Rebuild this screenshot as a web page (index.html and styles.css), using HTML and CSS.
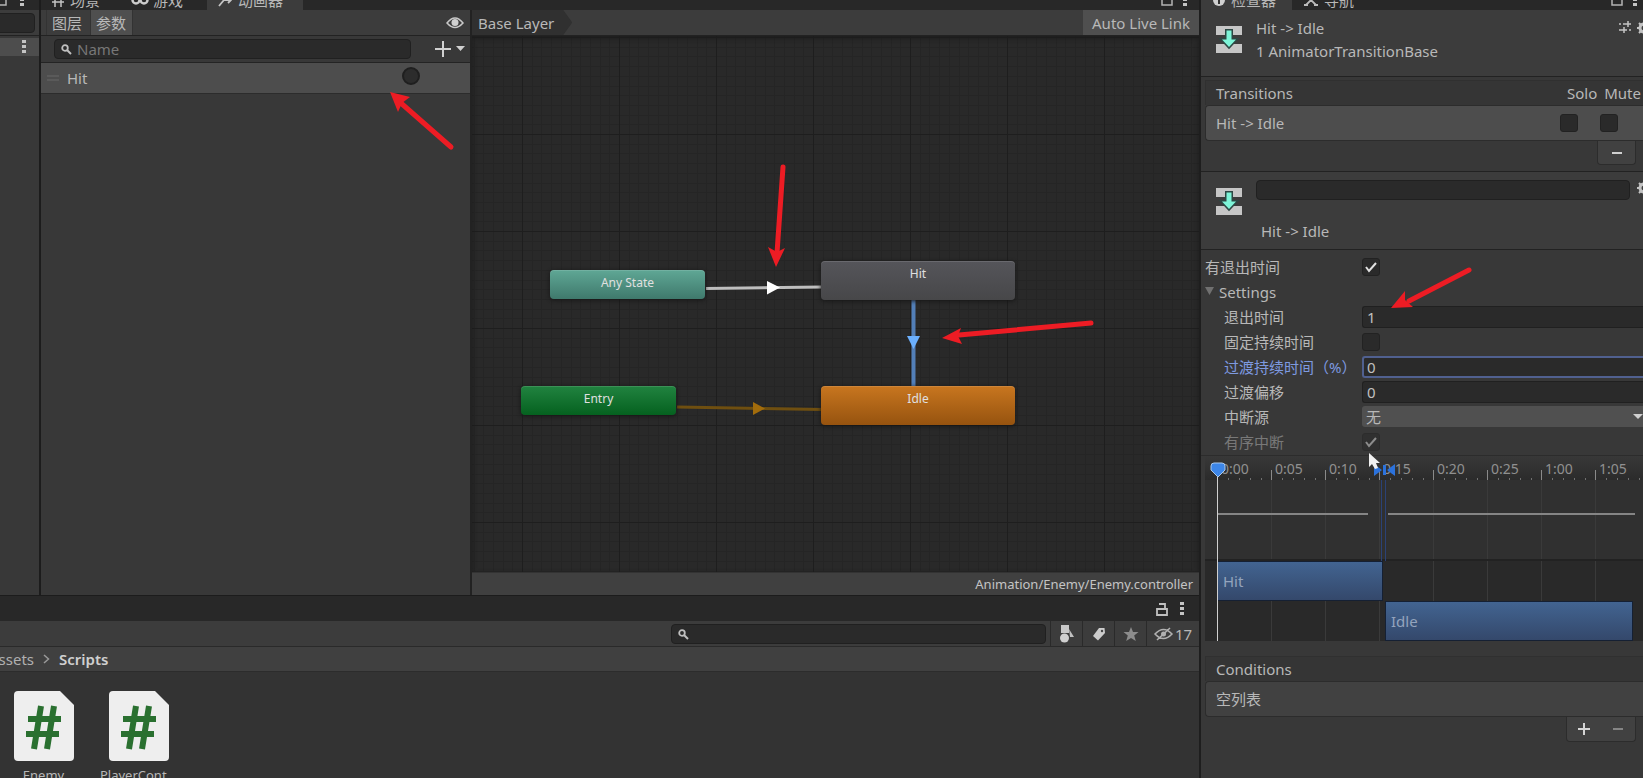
FILE: index.html
```html
<!DOCTYPE html>
<html lang="zh-CN">
<head>
<meta charset="utf-8">
<title>Animator</title>
<link rel="stylesheet" href="styles.css">
</head>
<body>
<svg class="defs" aria-hidden="true">
  <symbol id="transition" viewBox="0 0 28 28">
    <path d="M1 1h26v9H1zM1 19h26v9H1z" fill="#c6c6c6"/>
    <path d="M11.500 5.500h5v9h4.500L14 22 7 14.500h4.500z" fill="#7df5d8" stroke="#2c4743" stroke-width="3" paint-order="stroke"/>
  </symbol>
  <symbol id="dots" viewBox="0 0 4 14"><path d="M0 0h4v3H0zM0 5h4v3H0zM0 10h4v3H0z" fill="#c4c4c4"/></symbol>
  <symbol id="box" viewBox="0 0 12 12"><path d="M1 1h10v10H1z" fill="none" stroke="#b4b4b4" stroke-width="1.500"/></symbol>
  <symbol id="lens" viewBox="0 0 14 14"><circle cx="5" cy="6" r="2.800" fill="none" stroke="#c0c0c0" stroke-width="1.800"/><path d="M7 8l4 4" stroke="#c0c0c0" stroke-width="2"/></symbol>
  <symbol id="gear" viewBox="0 0 14 14"><circle cx="7" cy="7" r="4" fill="none" stroke="#c4c4c4" stroke-width="3"/><path d="M7 0v3M7 11v3M0 7h3M11 7h3M2 2l2 2M10 10l2 2M12 2l-2 2M4 10l-2 2" stroke="#c4c4c4" stroke-width="2"/></symbol>
  <symbol id="script" viewBox="0 0 60 70">
    <path d="M4 0h42l14 14v52q0 4-4 4H4q-4 0-4-4V4q0-4 4-4z" fill="#eee"/>
    <path d="M27 15l-7 43M40 15l-7 43M14 28h33M12 43h33" stroke="#2a7030" stroke-width="6" fill="none"/>
  </symbol>
</svg>

<div class="editor">
  <div class="workspace">
    <div class="upper">
      <aside class="hierarchy">
        <div class="dock"><div class="dock-row dock-tools"><svg width="12" height="12"><use href="#box"/></svg><svg width="4" height="14"><use href="#dots"/></svg></div></div>
        <div class="bar"><input class="field stub" type="text" aria-label="Search hierarchy"></div>
        <div class="scene-row"><button class="plain" aria-label="Scene menu"><svg width="4" height="14"><use href="#dots"/></svg></button></div>
      </aside>

      <section class="animator">
        <div class="dock">
          <div class="dock-row">
            <button class="tab tab-scene"><svg width="12" height="14" viewBox="0 0 12 14"><path d="M0 4h12M0 9h12M3 0v14M9 0v14" stroke="#c4c4c4" stroke-width="1.500"/></svg>场景</button>
            <button class="tab tab-game"><svg width="18" height="10" viewBox="0 0 18 10"><circle cx="5" cy="5" r="3.500" fill="none" stroke="#ccc" stroke-width="2.500"/><circle cx="13" cy="5" r="3.500" fill="none" stroke="#ccc" stroke-width="2.500"/></svg>游戏</button>
            <button class="tab tab-anim active"><svg width="14" height="14" viewBox="0 0 14 14"><path d="M1 13l5-6h7M10 4l3 3-3 3" fill="none" stroke="#c4c4c4" stroke-width="1.800"/></svg>动画器</button>
            <span class="dock-tools push"><svg width="12" height="12"><use href="#box"/></svg><svg width="4" height="14"><use href="#dots"/></svg></span>
          </div>
        </div>
        <div class="split">
          <div class="params">
            <div class="bar params-tabs">
              <button class="toggle">图层</button><button class="toggle on">参数</button>
              <button class="plain push" aria-label="Visibility"><svg width="18" height="12" viewBox="0 0 18 12"><path d="M1 6q8-10 16 0-8 9-16 0z" fill="none" stroke="#c8c8c8" stroke-width="1.500"/><circle cx="9" cy="5.500" r="3.500" fill="#d0d0d0"/></svg></button>
            </div>
            <div class="params-search">
              <label class="field search"><svg width="14" height="14"><use href="#lens"/></svg><input type="text" placeholder="Name" aria-label="Name"></label>
              <button class="plain add" aria-label="Add parameter"><svg width="30" height="16" viewBox="0 0 30 16"><path d="M8 0v16M0 8h16" stroke="#d0d0d0" stroke-width="2"/><path d="M21 5h9l-4.500 5z" fill="#d0d0d0"/></svg></button>
            </div>
            <div class="param-row">
              <svg width="12" height="6" viewBox="0 0 12 6"><path d="M0 1h12M0 5h12" stroke="#686868"/></svg>
              <label for="hit">Hit</label><input id="hit" class="trigger" type="radio">
            </div>
            <svg class="mark mark-param" width="70" height="64" viewBox="0 0 70 64"><path d="M12 12l49 43" /><path class="head" d="M0 0l20 5-8 6-4 9z"/></svg>
          </div>
          <div class="graph">
            <div class="bar graph-bar"><button class="crumb">Base Layer</button><button class="live">Auto Live Link</button></div>
            <div class="canvas">
              <svg class="edges" width="728" height="536" viewBox="0 0 728 536">
                <path d="M234 252.500l116-1.500" stroke="#bdbdbd" stroke-width="3"/><path d="M295 245l13 6.500-13 7z" fill="#fff"/>
                <path d="M441.500 264v87" stroke="#527fb8" stroke-width="4"/><path d="M435 300h13l-6.500 13z" fill="#6bb0ff"/>
                <path d="M205 371l145 2.500" stroke="#6f4f10" stroke-width="3"/><path d="M281 366l12 6.500-12 6.500z" fill="#a26c0c"/>
              </svg>
              <div class="node any">Any State</div>
              <div class="node hit">Hit</div>
              <div class="node entry">Entry</div>
              <div class="node idle">Idle</div>
              <svg class="mark mark-graph" width="728" height="536" viewBox="0 0 728 536">
                <path d="M311 131l-6 86"/><path class="head" d="M304 231l-8-20 9 5 8-4z"/>
                <path d="M619 287l-132 12"/><path class="head" d="M470 302l19-10-3 8 4 8z"/>
              </svg>
            </div>
            <div class="path">Animation/Enemy/Enemy.controller</div>
          </div>
        </div>
      </section>
    </div>

    <section class="project">
      <div class="project-dock">
        <svg width="12" height="14" viewBox="0 0 12 14"><path d="M1 7h10v6H1zM3 2h6v5" fill="none" stroke="#c0c0c0" stroke-width="1.800"/></svg>
        <svg width="4" height="14"><use href="#dots"/></svg>
      </div>
      <div class="project-tools">
        <label class="field search"><svg width="14" height="14"><use href="#lens"/></svg><input type="text" aria-label="Search project"></label>
        <button class="tool" aria-label="Type"><svg width="16" height="18" viewBox="0 0 16 18"><path d="M2 0h8v8H2z" fill="#c8c8c8"/><circle cx="5.500" cy="13" r="4.500" fill="#d0d0d0"/><path d="M10 4l5 8h-4z" fill="#c0c0c0"/></svg></button>
        <button class="tool" aria-label="Label"><svg width="14" height="14" viewBox="0 0 14 14"><path d="M7 1h5.500L13 6l-7 7.500L1 9z" fill="#ccc"/><circle cx="10" cy="4" r="1.200" fill="#444"/></svg></button>
        <button class="tool" aria-label="Favorite"><svg width="16" height="16" viewBox="0 0 16 16"><path d="M8 1l2 5h5.500l-4.300 3.500 1.600 5.500L8 12l-4.800 3 1.600-5.500L.5 6H6z" fill="#8c8c8c"/></svg></button>
        <button class="tool hidden-count"><svg width="19" height="14" viewBox="0 0 19 14"><path d="M1 7q8.500-9 17 0-8.500 9-17 0zM3 13L16 1" fill="none" stroke="#b0b0b0" stroke-width="1.600"/><circle cx="9.500" cy="7" r="2.500" fill="#b0b0b0"/></svg>17</button>
      </div>
      <nav class="crumbs"><a href="#">Assets</a><svg width="7" height="10" viewBox="0 0 7 10"><path d="M1 1l4.500 4L1 9" fill="none" stroke="#999" stroke-width="1.500"/></svg><strong>Scripts</strong></nav>
      <div class="files">
        <button class="file"><svg width="60" height="70"><use href="#script"/></svg>Enemy</button>
        <button class="file"><svg width="60" height="70"><use href="#script"/></svg>PlayerCont...</button>
      </div>
    </section>
  </div>

  <aside class="inspector">
    <div class="dock">
      <div class="dock-row">
        <button class="tab tab-inspect active"><svg width="12" height="12" viewBox="0 0 12 12"><circle cx="6" cy="6" r="6" fill="#d0d0d0"/><path d="M6 2v2M6 5v5" stroke="#333" stroke-width="2"/></svg>检查器</button>
        <button class="tab tab-nav"><svg width="14" height="14" viewBox="0 0 14 14"><path d="M2 2l10 10M12 2L2 12M0 12h4M10 12h4M0 2h4" stroke="#bbb" stroke-width="1.800"/></svg>导航</button>
        <span class="dock-tools push"><svg width="12" height="12"><use href="#box"/></svg><svg width="4" height="14"><use href="#dots"/></svg></span>
      </div>
    </div>
    <header class="head-block">
      <svg width="28" height="28"><use href="#transition"/></svg>
      <div class="titles"><div>Hit -&gt; Idle</div><div>1 AnimatorTransitionBase</div></div>
      <button class="plain" aria-label="Presets"><svg width="12" height="12" viewBox="0 0 12 12"><path d="M4 3h8M0 9h8M9 0v6M5 6v6M0 3h2M10 9h2" stroke="#c4c4c4" stroke-width="1.500"/></svg></button>
      <button class="plain" aria-label="Settings"><svg width="14" height="14"><use href="#gear"/></svg></button>
    </header>

    <section class="list transitions">
      <div class="list-head"><span>Transitions</span><span class="push">Solo</span><span>Mute</span></div>
      <div class="list-row selected"><span>Hit -&gt; Idle</span><input class="check push" type="checkbox" aria-label="Solo"><input class="check" type="checkbox" aria-label="Mute"></div>
      <div class="list-foot"><button aria-label="Remove transition"><svg width="10" height="12" viewBox="0 0 10 12"><path d="M0 6h10" stroke="#d0d0d0" stroke-width="2"/></svg></button></div>
    </section>

    <section class="name-block">
      <svg width="28" height="28"><use href="#transition"/></svg>
      <div class="name-body"><input class="field" type="text" aria-label="Transition name"><div>Hit -&gt; Idle</div></div>
      <button class="plain" aria-label="Options"><svg width="14" height="14"><use href="#gear"/></svg></button>
    </section>

    <section class="settings">
      <div class="row"><label for="exit">有退出时间</label><input id="exit" class="check" type="checkbox" checked></div>
      <button class="fold"><svg width="9" height="9" viewBox="0 0 9 9"><path d="M0 0h9L4.500 8z" fill="#707070"/></svg>Settings</button>
      <div class="row sub"><label for="time">退出时间</label><input id="time" class="field" type="text" value="1"></div>
      <div class="row sub"><label for="fixed">固定持续时间</label><input id="fixed" class="check" type="checkbox"></div>
      <div class="row sub current"><label for="duration">过渡持续时间（%）</label><input id="duration" class="field" type="text" value="0"></div>
      <div class="row sub"><label for="offset">过渡偏移</label><input id="offset" class="field" type="text" value="0"></div>
      <div class="row sub"><label for="source">中断源</label><span class="select"><select id="source"><option>无</option></select></span></div>
      <div class="row sub off"><label for="ordered">有序中断</label><input id="ordered" class="check" type="checkbox" checked disabled></div>
      <svg class="mark mark-time" width="86" height="48" viewBox="0 0 86 48"><path d="M78 2L18 33"/><path class="head" d="M0 40l14-17v9l8 7z"/></svg>
    </section>

    <section class="timeline">
      <div class="ruler"><span>0:00</span><span>0:05</span><span>0:10</span><span>0:15</span><span>0:20</span><span>0:25</span><span>1:00</span><span>1:05</span></div>
      <div class="curves"><i class="curve from"></i><i class="curve to"></i></div>
      <div class="track"><div class="clip clip-hit">Hit</div></div>
      <div class="track last"><div class="clip clip-idle">Idle</div></div>
      <div class="span"></div>
      <div class="playhead"></div>
      <svg class="handles" width="190" height="32" viewBox="0 0 190 32">
        <path d="M1 11q0-3 3-3h8q3 0 3 3v4l-7 7-7-7z" fill="#3d86e8" stroke="#a8c8ee"/>
        <path d="M164 9l8 6-8 6zM185 9l-8 6 8 6zM173 10h3v10h-3z" fill="#2b72dc"/>
        <path d="M159-2v14l3-3 3 5 3-1-2-5h4z" fill="#f0f0f0"/>
      </svg>
    </section>

    <section class="list conditions">
      <div class="list-head"><span>Conditions</span></div>
      <div class="list-row">空列表</div>
      <div class="list-foot"><div class="pair"><button aria-label="Add condition"><svg width="12" height="12" viewBox="0 0 12 12"><path d="M0 6h12M6 0v12" stroke="#d4d4d4" stroke-width="2"/></svg></button><button aria-label="Remove condition"><svg width="10" height="12" viewBox="0 0 10 12"><path d="M0 6h10" stroke="#858585" stroke-width="2"/></svg></button></div></div>
    </section>
  </aside>
</div>
</body>
</html>
```

FILE: styles.css
```css
* { box-sizing: border-box; }
html, body { height: 100%; }
body {
  margin: 0;
  overflow: hidden;
  background: #383838;
  color: #b8b8b8;
  font: 15px/20px "Noto Sans", "Noto Sans CJK SC", sans-serif;
}
button, input, select { font: inherit; color: inherit; margin: 0; }
button { border: 0; padding: 0; background: none; white-space: nowrap; }
svg { display: block; flex: none; }
.defs { position: absolute; width: 0; height: 0; }
.push { margin-left: auto; }

.editor { display: grid; grid-template-columns: minmax(0, 1fr) 444px; height: 100vh; }
.workspace { display: flex; flex-direction: column; min-width: 0; }
.upper { flex: 1; display: flex; min-height: 0; border-bottom: 1px solid #1c1c1c; }
.hierarchy { width: 41px; flex: none; border-right: 2px solid #1c1c1c; }
.animator { flex: 1; min-width: 0; display: flex; flex-direction: column; }

.dock { height: 10px; flex: none; overflow: hidden; background: #282828; display: flex; align-items: flex-end; }
.dock-row { display: flex; flex: 1; height: 20px; flex-shrink: 0; }
.dock-tools { display: flex; align-items: center; gap: 10px; padding: 0 12px; }
.hierarchy .dock-tools { padding: 0; gap: 13px; margin-left: -5px; }
.tab { display: flex; align-items: center; gap: 6px; padding: 0 20px 0 11px; }
.tab.active { background: #3c3c3c; }
.tab-game { padding: 0 24px 0 11px; gap: 4px; }

.bar { display: flex; align-items: center; height: 26px; background: #3c3c3c; border-bottom: 1px solid #222; }
.field {
  height: 20px;
  border: 1px solid #202020;
  border-radius: 4px;
  background: #2a2a2a;
  color: #c0c0c0;
  outline: 0;
}
.stub { width: 42px; margin-left: -7px; }
.scene-row { display: flex; align-items: center; justify-content: flex-end; height: 18px; margin-top: 2px; padding-right: 13px; background: #4d4d4d; }

.split { flex: 1; display: flex; min-height: 0; }
.params { position: relative; flex: 0 0 431px; border-right: 2px solid #222; }
.params-tabs { padding: 0 6px 0 5px; }
.toggle { height: 25px; padding: 0 8px 0 5px; border-left: 1px solid #333; line-height: 24px; }
.toggle.on { background: #4f4f4f; padding: 0 6px 0 5px; border-right: 1px solid #333; }
.params-search { display: flex; align-items: center; gap: 24px; height: 27px; padding: 0 5px 0 13px; border-bottom: 1px solid #242424; }
.search { display: flex; align-items: center; gap: 3px; flex: 1; padding: 0 5px; }
.search input { flex: 1; min-width: 0; border: 0; padding: 0; height: 18px; background: none; outline: 0; }
.search input::placeholder { color: #777; opacity: 1; }
.param-row { display: flex; align-items: center; gap: 8px; height: 31px; padding: 0 50px 0 6px; border-bottom: 1px solid #2c2c2c; background: #4d4d4d; }
.trigger { appearance: none; width: 18px; height: 18px; margin-left: auto; margin-bottom: 4px; border: 2px solid #1f1f1f; border-radius: 50%; background: #2c2c2c; }

.mark { position: absolute; overflow: visible; fill: none; stroke: #ed1c24; stroke-width: 5; stroke-linecap: round; pointer-events: none; }
.mark .head { fill: #ed1c24; stroke: none; }
.mark-param { left: 349px; top: 82px; }
.mark-graph { left: 0; top: 0; }
.mark-time { left: 190px; top: 18px; }

.graph { flex: 1; min-width: 0; display: flex; flex-direction: column; }
.graph-bar { flex: none; justify-content: space-between; }
.crumb { height: 25px; padding: 0 18px 0 6px; background: #303030; clip-path: polygon(0 0, calc(100% - 9px) 0, 100% 50%, calc(100% - 9px) 100%, 0 100%); }
.live { height: 25px; padding: 0 9px; background: #4f4f4f; line-height: 24px; }
.canvas {
  position: relative;
  flex: 1;
  overflow: hidden;
  background-color: #292929;
  background-image:
    linear-gradient(90deg, #1e1e1e 1px, transparent 1px),
    linear-gradient(#1e1e1e 1px, transparent 1px),
    repeating-linear-gradient(90deg, #252525 0 1px, transparent 1px 10%),
    repeating-linear-gradient(#252525 0 1px, transparent 1px 10%);
  background-size: 97px 97px;
  background-position: 50px 1px;
  box-shadow: inset 0 2px 5px #1c1c1c;
}
.edges { position: absolute; left: 0; top: 0; }
.node { position: absolute; border-radius: 4px; color: #e0e0e0; font-size: 12px; line-height: 26px; text-align: center; box-shadow: 0 1px 4px #161616, inset 0 1px 0 rgba(255, 255, 255, .12); }
.any { left: 78px; top: 234px; width: 155px; height: 29px; background: linear-gradient(#5fa795, #3f796c); }
.hit { left: 349px; top: 225px; width: 194px; height: 39px; background: linear-gradient(#55555a, #474749); }
.entry { left: 49px; top: 350px; width: 155px; height: 29px; background: linear-gradient(#218340, #05611f); }
.idle { left: 349px; top: 350px; width: 194px; height: 39px; background: linear-gradient(#c8761f, #96530f); }
.path { height: 23px; line-height: 22px; padding: 0 6px; border-top: 1px solid #333; background: #404040; color: #c4c4c4; text-align: right; font-size: 13px; }

.project { flex: none; height: 182px; overflow: hidden; background: #333; }
.project-dock { display: flex; align-items: center; justify-content: flex-end; gap: 12px; height: 25px; padding-right: 15px; background: #282828; }
.project-tools { display: flex; align-items: center; justify-content: flex-end; height: 26px; border-bottom: 1px solid #2a2a2a; background: #3c3c3c; }
.project-tools .search { flex: 0 0 375px; margin-right: 4px; }
.tool { display: flex; align-items: center; justify-content: center; width: 32px; height: 25px; border-left: 1px solid #2a2a2a; }
.hidden-count { width: 53px; gap: 2px; }
.crumbs { display: flex; align-items: center; gap: 9px; height: 25px; margin-left: -11px; border-bottom: 1px solid #2c2c2c; background: #404040; }
.crumbs a { color: #b0b0b0; text-decoration: none; }
.crumbs strong { color: #d0d0d0; font-weight: 600; }
.files { display: flex; padding: 19px 0 0; margin-left: -4px; }
.file { display: flex; flex-direction: column; align-items: center; gap: 4px; width: 95px; font-size: 13px; line-height: 20px; }

.inspector { position: relative; overflow: hidden; border-left: 2px solid #1e1e1e; background: #383838; }
.tab-inspect { padding: 0 16px 0 12px; }
.tab-nav { padding-left: 12px; }
.inspector .dock-tools { margin-right: -6px; }
.head-block { display: flex; align-items: flex-start; height: 67px; margin-right: -8px; padding: 15px 0 0 14px; border-bottom: 1px solid #222; background: #3c3c3c; }
.titles { flex: 1; margin: -8px 0 0 13px; line-height: 23px; }
.titles + .plain { margin: -4px 6px 0 0; }
.titles ~ .plain:last-child { margin-top: -4px; }
.list { margin-left: 4px; }
.list-head { display: flex; align-items: center; gap: 7px; height: 25px; padding: 0 0 0 10px; border: 1px solid #303030; border-width: 1px 0 0 1px; background: #353535; }
.transitions .list-head { padding-right: 2px; }
.list-row { display: flex; align-items: center; height: 36px; padding: 0 25px 0 10px; border: 1px solid #2c2c2c; border-right: 0; border-radius: 4px 0 0 4px; background: #414141; }
.list-row.selected { gap: 22px; background: #4d4d4d; }
.list-foot { display: flex; justify-content: flex-end; padding-right: 7px; }
.list-foot button { display: flex; align-items: center; justify-content: center; width: 39px; height: 24px; }
.transitions .list-foot button, .pair { border: 1px solid #2c2c2c; border-top: 0; border-radius: 0 0 4px 4px; background: #414141; }
.pair { display: flex; width: 70px; }
.pair button { width: 34px; }
.transitions { height: 94px; padding-top: 3px; }
.check { appearance: none; flex: none; width: 18px; height: 18px; border: 1px solid #222; border-radius: 3px; background: #2a2a2a; }
.check:checked {
  background: #2a2a2a url("data:image/svg+xml,%3Csvg xmlns='http://www.w3.org/2000/svg' viewBox='0 0 16 16'%3E%3Cpath d='M3 8l3 4 7-8' fill='none' stroke='%23e0e0e0' stroke-width='2'/%3E%3C/svg%3E") center / 16px;
}
.name-block { display: flex; align-items: flex-start; gap: 13px; height: 79px; margin-right: -8px; padding: 15px 0 0 14px; border-top: 1px solid #222; border-bottom: 1px solid #222; background: #3c3c3c; }
.name-body { flex: 1; margin-top: -7px; }
.name-body .field { width: 100%; display: block; }
.name-body div { margin: 21px 0 0 5px; }
.name-block .plain { margin: -6px 0 0 -6px; }

.settings { position: relative; padding: 4px 0 0 4px; height: 206px; border-bottom: 1px solid #2c2c2c; }
.row { display: flex; align-items: center; height: 25px; }
.row label { width: 157px; flex: none; white-space: nowrap; }
.row.sub { padding-left: 19px; }
.row.sub label { width: 138px; }
.row .field { flex: 1; min-width: 0; height: 22px; padding: 0 4px; border-radius: 3px 0 0 3px; border-right: 0; }
.fold { display: flex; align-items: center; gap: 5px; height: 25px; }
.current label { color: #7e9ae0; }
.row.current .field { border: 2px solid #50608f; border-right: 0; padding: 0 3px; }
.off { opacity: .5; }
.select { position: relative; flex: 1; height: 21px; background: #505050; border-radius: 3px 0 0 3px; }
.select select { appearance: none; display: block; width: 100%; height: 21px; border: 0; padding: 0 4px; line-height: 20px; background: none; outline: 0; }
.select::after { content: ""; position: absolute; right: 0; top: 8px; border: 5px solid transparent; border-top-color: #d0d0d0; border-bottom: 0; }

.timeline { position: relative; margin-left: 4px; }
.ruler { display: flex; height: 24px; padding: 4px 0 0 12px; overflow: hidden; background: linear-gradient(#383838, #2b2b2b); color: #909090; font-size: 14px; line-height: 18px; }
.ruler span {
  flex: 0 0 54px;
  padding-left: 4px;
  background:
    linear-gradient(#8a8a8a, #8a8a8a) 0 100% / 1px 10px no-repeat,
    repeating-linear-gradient(90deg, #707070 0 1px, transparent 1px 11px) 0 100% / 54px 2px no-repeat;
}
.curves, .track { background: repeating-linear-gradient(90deg, #3a3a3a 0 1px, transparent 1px 54px) 12px 0 no-repeat #303030; }
.curves { display: flex; align-items: center; gap: 20px; height: 81px; padding: 0 8px 11px 12px; border-bottom: 2px solid #222; }
.curve { height: 2px; background: #858585; }
.from { flex: 0 0 151px; }
.to { flex: 1; }
.track { height: 40px; padding-left: 12px; background-color: #292929; }
.clip { height: 40px; padding: 0 5px; border: 1px solid #152033; background: linear-gradient(#426491, #34486b); color: #94a4bd; line-height: 38px; }
.clip-hit { width: 166px; }
.clip-idle { margin: 0 10px 0 168px; }
.span { position: absolute; left: 176px; top: 24px; width: 5px; height: 81px; border: 1px solid #2b4276; border-width: 0 1px; }
.playhead { position: absolute; left: 12px; top: 20px; width: 1px; bottom: 0; background: #d0d0d0; }
.handles { position: absolute; left: 5px; top: -1px; overflow: visible; }
.conditions { margin-top: 15px; }
```
